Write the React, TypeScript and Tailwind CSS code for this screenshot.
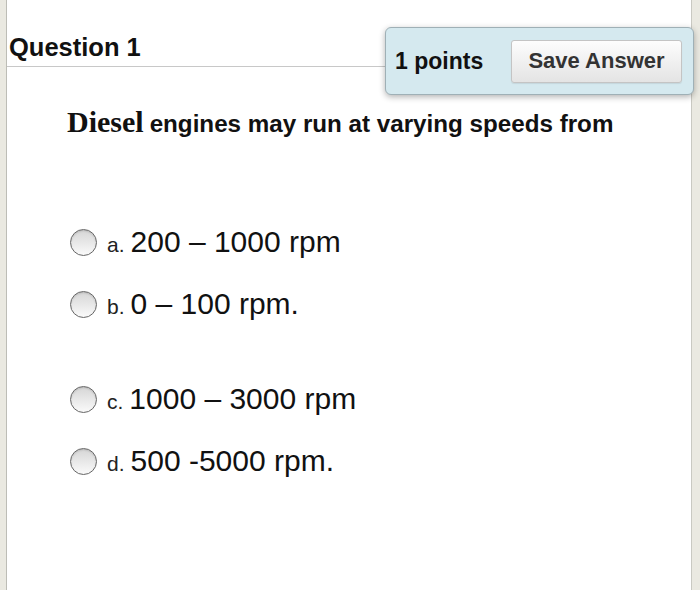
import React from "react";

const options = [
  { l: "a.", t: "200 \u2013 1000 rpm" },
  { l: "b.", t: "0 \u2013 100 rpm." },
  { l: "c.", t: "1000 \u2013 3000 rpm" },
  { l: "d.", t: "500 -5000 rpm." },
];

function Row({ l, t }: { l: string; t: string }) {
  return (
    <div className="flex h-[62px] items-center pl-[63px]">
      <span className="h-[27px] w-[27px] shrink-0 rounded-full border-[1.5px] border-[#666] bg-linear-to-b from-[#d6d6d6] to-[#fafafa] shadow-[inset_0_1px_2px_rgba(0,0,0,0.15)]" />
      <span className="ml-[10px] flex items-baseline">
        <span className="text-[21px] leading-none text-[#222]">{l}</span>
        <span className="ml-[6px] text-[30px] leading-none text-[#111]">{t}</span>
      </span>
    </div>
  );
}

export default function App() {
  return (
    <div className="flex h-[590px] w-[700px] bg-white font-['Liberation_Sans',Arial,sans-serif]">
      <div className="w-[7px] shrink-0 border-r border-[#bdbdb6] bg-[#eae9e1]" />
      <div className="flex min-w-0 flex-1 flex-col">
        <div className="flex items-start">
          <div className="h-[67px] flex-1 border-b border-[#c8c8c8] pl-[2px] pt-[35px]">
            <span className="text-[25.5px] font-bold leading-[25px] text-[#111]">Question 1</span>
          </div>
          <div className="relative z-10 -mr-[3px] mt-[27px] flex h-[68px] w-[309px] items-center rounded-[6px] border border-[#9fb0b6] bg-[#d5e9ef] pl-[9px] shadow-[0_2px_6px_rgba(0,0,0,0.3)]">
            <span className="text-[23px] font-bold leading-none text-[#111]">1 points</span>
            <button className="ml-auto mr-[11px] flex h-[43px] w-[171px] items-center justify-center rounded-[3px] border border-[#c4c4c4] bg-linear-to-b from-[#fdfdfd] to-[#e4e4e4] text-[22px] font-bold leading-none text-[#333] shadow-[0_1px_1px_rgba(0,0,0,0.08)]">
              Save Answer
            </button>
          </div>
        </div>
        <div className="mt-[12px] flex h-[30px] items-baseline pl-[60px] text-[#111]">
          <span className="font-['Liberation_Serif','Times_New_Roman',serif] text-[30px] font-bold leading-[30px]">Diesel</span>
          <span className="ml-[6px] text-[24.2px] font-bold leading-[30px]">engines may run at varying speeds from</span>
        </div>
        <div className="mt-[74px]">
          <Row {...options[0]} />
          <Row {...options[1]} />
        </div>
        <div className="mt-[33px]">
          <Row {...options[2]} />
          <Row {...options[3]} />
        </div>
      </div>
      <div className="w-[9px] shrink-0 border-l border-[#c9c9c2] bg-[#eae9e1]" />
    </div>
  );
}
